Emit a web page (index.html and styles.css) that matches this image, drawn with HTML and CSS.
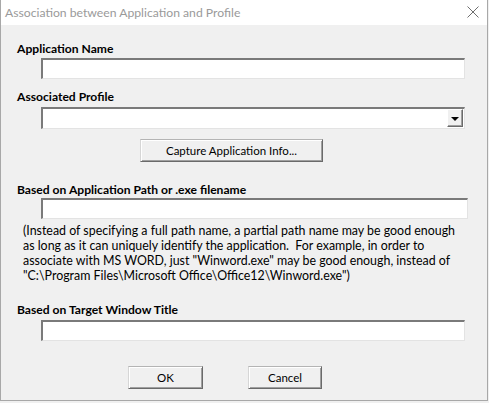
FILE: index.html
```html
<!DOCTYPE html>
<html>
<head>
<meta charset="utf-8">
<link rel="stylesheet" href="styles.css">
</head>
<body>
<div class="window">
  <div class="titlebar">
    <span class="title">Association between Application and Profile</span>
    <svg class="close" width="12" height="12" viewBox="0 0 12 12"><path d="M0.5 0.5L11.5 11.5M11.5 0.5L0.5 11.5" stroke="#6e6e6e" stroke-width="1" fill="none"/></svg>
  </div>
  <div class="form">
    <div class="label l1">Application Name</div>
    <div class="field f1"></div>
    <div class="label l2">Associated Profile</div>
    <div class="field combo">
      <div class="drop"><span class="tri"></span></div>
    </div>
    <div class="btn capture">Capture Application Info...</div>
    <div class="label l3">Based on Application Path or .exe filename</div>
    <div class="field f3"></div>
    <p class="note">(Instead of specifying a full path name, a partial path name may be good enough as long as it can uniquely identify the application.&nbsp; For example, in order to associate with MS WORD, just "Winword.exe" may be good enough, instead of "C:\Program Files\Microsoft Office\Office12\Winword.exe")</p>
    <div class="label l4">Based on Target Window Title</div>
    <div class="field f4"></div>
    <div class="actions">
      <div class="btn ok">OK</div>
      <div class="btn cancel">Cancel</div>
    </div>
  </div>
</div>
</body>
</html>
```
FILE: styles.css
```css
html, body {
  margin: 0;
  padding: 0;
  background: #f0f0f0;
}
.window {
  width: 488px;
  height: 401px;
  box-sizing: border-box;
  border-left: 1px solid #a8a8a8;
  border-right: 1px solid #a8a8a8;
  border-bottom: 1px solid #a8a8a8;
  background: #f0f0f0;
  overflow: hidden;
}
.titlebar {
  height: 25px;
  background: #ffffff;
  display: flex;
  align-items: center;
  justify-content: space-between;
  padding: 0 8px 0 4px;
}
.title {
  font-family: "Lato", sans-serif;
  font-size: 12.2px;
  color: #9a9a9a;
  margin-top: -1px;
}
.close {
  margin-top: -1px;
}
.form {
  padding: 16px 0 0 16px;
  display: flex;
  flex-direction: column;
  align-items: flex-start;
}
.label {
  font-family: "Lato", sans-serif;
  font-weight: bold;
  font-size: 12.1px;
  line-height: 15px;
  height: 15px;
  color: #000;
}
.field {
  box-sizing: border-box;
  margin-left: 24px;
  width: 424px;
  height: 21px;
  background: #fff;
  border-top: 2px solid #7a7a7a;
  border-left: 2px solid #7a7a7a;
  border-right: 1px solid #e3e3e3;
  border-bottom: 1px solid #e3e3e3;
  position: relative;
}
.f1 { margin-top: 2px; }
.l2 { margin-top: 10px; }
.combo {
  margin-top: 3px;
  height: 22px;
  display: flex;
  justify-content: flex-end;
  align-items: stretch;
  padding: 0 1px 1px 0;
}
.drop {
  width: 16px;
  box-sizing: border-box;
  background: #f0f0f0;
  border-top: 1px solid #ffffff;
  border-left: 1px solid #ffffff;
  border-right: 1px solid #6a6a6a;
  border-bottom: 1px solid #6a6a6a;
  box-shadow: inset -1px -1px 0 #a0a0a0;
  display: flex;
  align-items: center;
  justify-content: center;
}
.tri {
  width: 0;
  height: 0;
  border-left: 4px solid transparent;
  border-right: 4px solid transparent;
  border-top: 4px solid #000;
  margin-top: 1px;
}
.btn {
  box-sizing: border-box;
  height: 23px;
  background: #f0f0f0;
  border-top: 1px solid #b4b4b4;
  border-left: 1px solid #d6d6d6;
  border-right: 1px solid #6a6a6a;
  border-bottom: 1px solid #6a6a6a;
  box-shadow: inset 1px 1px 0 #ffffff, inset -1px -1px 0 #a0a0a0;
  font-family: "Lato", sans-serif;
  font-size: 11.5px;
  color: #000;
  display: flex;
  align-items: center;
  justify-content: center;
}
.capture {
  margin-top: 10px;
  margin-left: 123px;
  width: 183px;
}
.l3 { margin-top: 20px; }
.f3 {
  margin-top: 1px;
  width: 427px;
}
.note {
  margin: 4px 0 0 6px;
  width: 446px;
  font-family: "Lato", sans-serif;
  font-size: 12.4px;
  line-height: 15px;
  color: #000;
}
.l4 { margin-top: 19px; }
.f4 {
  margin-top: 3px;
  height: 21px;
}
.actions {
  margin-top: 25px;
  margin-left: 111px;
  display: flex;
  gap: 45px;
}
.ok { width: 75px; }
.cancel { width: 74px; }
```
